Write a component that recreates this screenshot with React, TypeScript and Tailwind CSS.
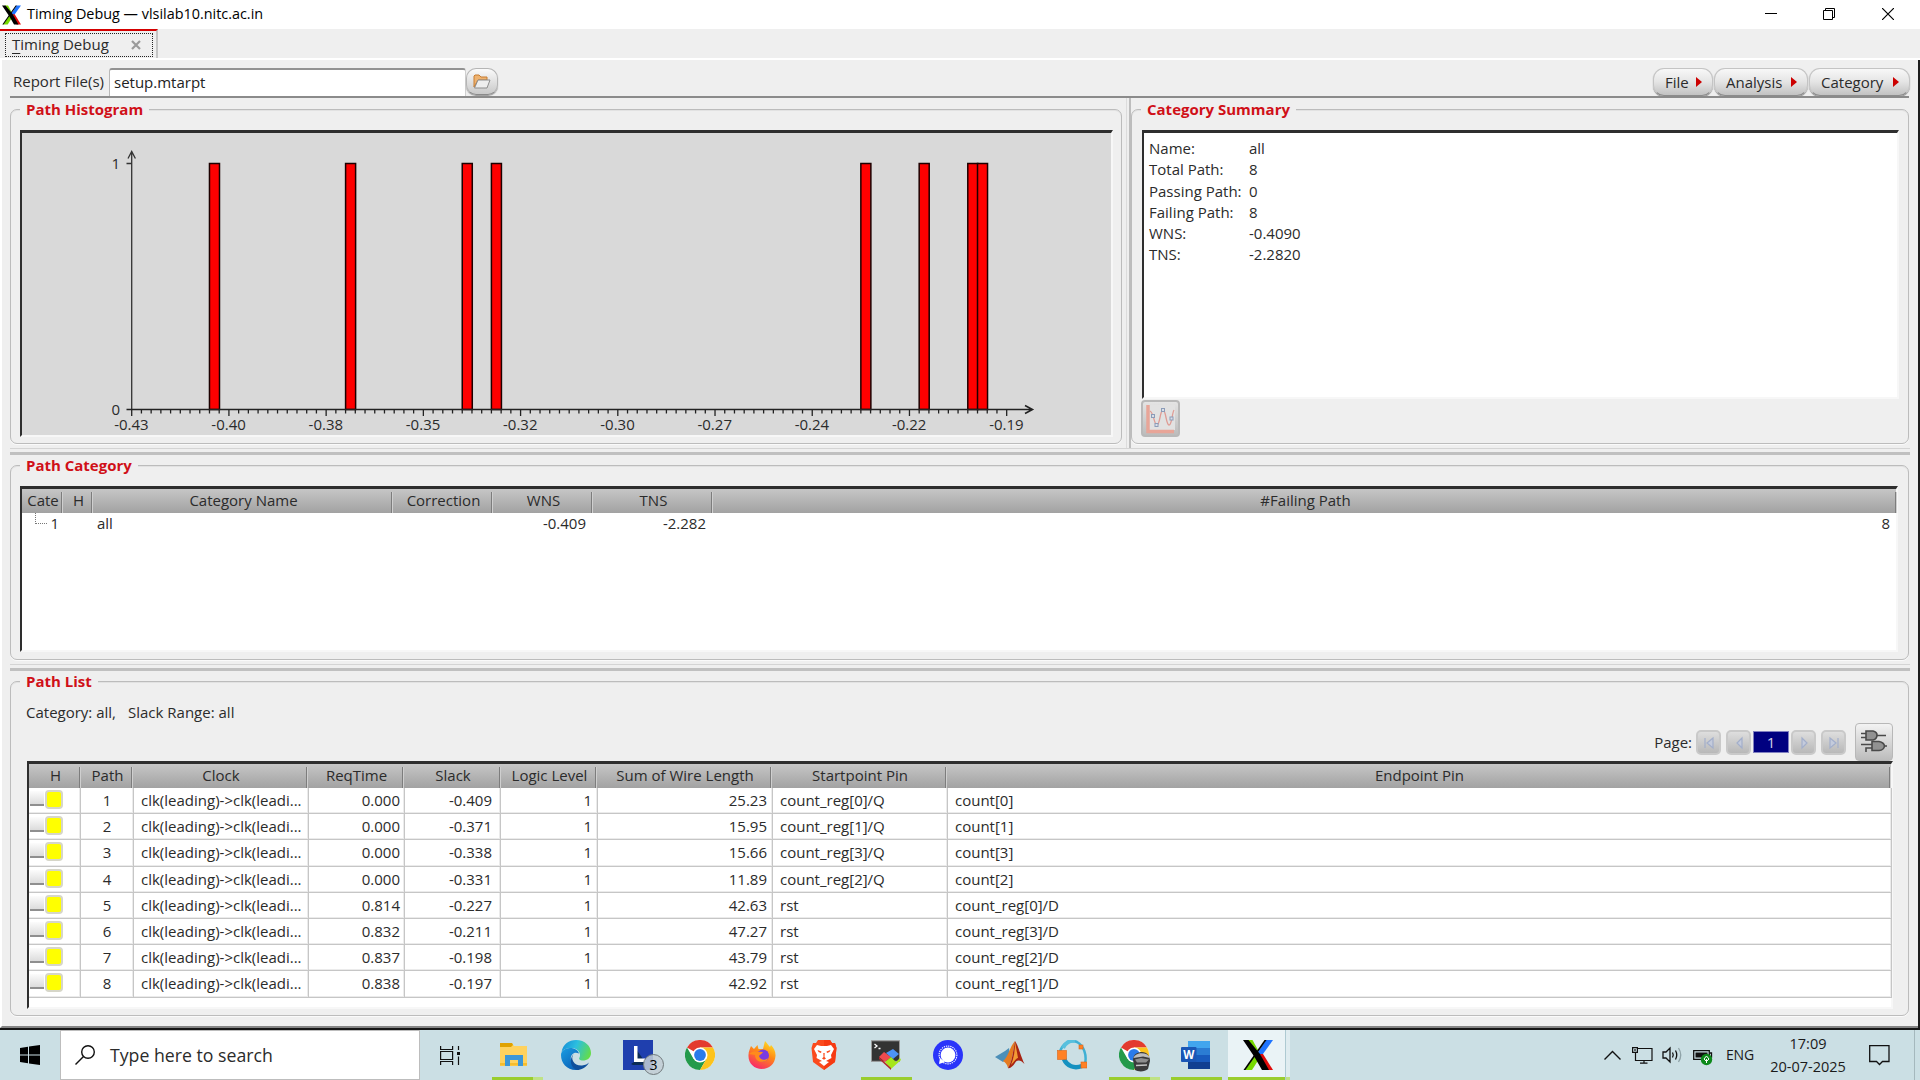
import React from 'react';

const bars = [8, 22, 34, 37, 75, 81, 86, 87];
const xLabels = ['-0.43', '-0.40', '-0.38', '-0.35', '-0.32', '-0.30', '-0.27', '-0.24', '-0.22', '-0.19'];
const STEP = 9.722;
const X0 = 109.7;

const rows = [
  ['1', '0.000', '-0.409', '25.23', 'count_reg[0]/Q', 'count[0]'],
  ['2', '0.000', '-0.371', '15.95', 'count_reg[1]/Q', 'count[1]'],
  ['3', '0.000', '-0.338', '15.66', 'count_reg[3]/Q', 'count[3]'],
  ['4', '0.000', '-0.331', '11.89', 'count_reg[2]/Q', 'count[2]'],
  ['5', '0.814', '-0.227', '42.63', 'rst', 'count_reg[0]/D'],
  ['6', '0.832', '-0.211', '47.27', 'rst', 'count_reg[3]/D'],
  ['7', '0.837', '-0.198', '43.79', 'rst', 'count_reg[2]/D'],
  ['8', '0.838', '-0.197', '42.92', 'rst', 'count_reg[1]/D'],
];

function XLogo({ className }: { className?: string }) {
  return (
    <svg viewBox="0 0 30 30" className={className}>
      <path d="M23 0H30L18.500 16L14.500 13Z" fill="#1f74ff" />
      <path d="M17 14L20 14L30 30H23Z" fill="#e00b0b" />
      <path d="M4 0H9.500L15 10L12 14Z" fill="#76d900" />
      <path d="M2 30L12 15L16 19L9 30Z" fill="#76d900" />
      <path d="M0 0H5.500L17 14L26 30H19L11.500 17Z" fill="#000" />
      <path d="M21.500 0H23.500L2.500 30H0.500Z" fill="#000" />
    </svg>
  );
}

function Group({ title, className, children }: { title: string; className: string; children: React.ReactNode }) {
  return (
    <div className={`relative rounded-[7px] border border-[#bcbcbc] shadow-[inset_0_1px_0_#e2e2e2,0_1px_0_#fafafa] ${className}`}>
      <div className="absolute -top-[10px] left-[9px] bg-[#efefef] px-[6px] text-[15px] leading-[19px] font-bold whitespace-nowrap text-[#d01018]">
        {title}
      </div>
      {children}
    </div>
  );
}

function Histogram() {
  return (
    <svg width="1088" height="303" className="block text-[15px]" fontFamily="Open Sans">
      {bars.map((b) => (
        <rect key={b} x={X0 + b * STEP} y="30.5" width={STEP + 0.3} height="246" fill="#f00" stroke="#1c0000" strokeWidth="1.5" />
      ))}
      <path d="M109.700 277V18M106 25.500L109.700 18.500L113.400 25.500M104.500 30.500H110" stroke="#333" strokeWidth="1.3" fill="none" />
      <path d="M104.500 276.500H1010M1003 272.500L1010.500 276.500L1003 280.500" stroke="#222" strokeWidth="1.6" fill="none" />
      {Array.from({ length: 91 }, (_, i) => (
        <path key={i} d={`M${X0 + i * STEP} 277v${i % 10 === 0 ? 6 : 3.5}`} stroke="#222" strokeWidth="1.3" />
      ))}
      <text x="98" y="36" textAnchor="end" fill="#2b2b2b">1</text>
      <text x="98" y="282" textAnchor="end" fill="#2b2b2b">0</text>
      {xLabels.map((l, i) => (
        <text key={l} x={X0 + i * STEP * 10 - 0.3} y="297" textAnchor="middle" fill="#2b2b2b">{l}</text>
      ))}
    </svg>
  );
}

function MenuButton({ label, className }: { label: string; className: string }) {
  return (
    <div className={`flex h-[28px] items-center justify-between rounded-[11px] border border-[#c4c4c4] border-b-[#8c8c8c] bg-linear-to-b from-[#f8f8f8] via-[#e4e4e4] to-[#c2c2c2] pr-[10px] pb-px pl-[11px] shadow-[0_1px_1px_#8a8a8a] ${className}`}>
      <span>{label}</span>
      <svg width="6" height="10" viewBox="0 0 6 10"><path d="M0 0L6 5L0 10Z" fill="#cc0000" /></svg>
    </div>
  );
}

function HeadCell({ children, className }: { children?: React.ReactNode; className: string }) {
  return (
    <div className={`flex h-full shrink-0 items-end ${className}`}>
      <div className="flex h-full grow items-center justify-center overflow-hidden pb-[2px] pl-[3px] whitespace-nowrap">{children}</div>
      <div className="h-[21px] w-[2px] shrink-0 border-r border-[#cfcfcf] bg-[#7d7d7d]" />
    </div>
  );
}

function PageButton({ d, className = '' }: { d: string; className?: string }) {
  return (
    <div className={`flex h-[25px] w-[25px] items-center justify-center rounded-[5px] border-2 border-[#c9c9c9] bg-linear-to-b from-[#dedede] to-[#b8b8b8] ${className}`}>
      <svg width="12" height="14" viewBox="0 0 12 14" fill="#c4cbdc" stroke="#a3afcb" strokeWidth="1.2"><path d={d} /></svg>
    </div>
  );
}

function Splitter({ className }: { className: string }) {
  return (
    <div className={`border-t border-[#d4d4d4] pt-[3px] ${className}`}>
      <div className="h-[3px] bg-[#c0c0c0]" />
    </div>
  );
}

function Slot({ children, line, className = '' }: { children: React.ReactNode; line?: React.ReactNode; className?: string }) {
  return (
    <div className={`flex h-[50px] w-[62px] shrink-0 flex-col ${className}`}>
      <div className="flex h-[47px] items-start justify-center pt-[10px]">{children}</div>
      <div className="flex h-[3px] justify-center">{line}</div>
    </div>
  );
}

const doubleLine = (
  <div className="flex h-[3px] w-[51px]">
    <div className="w-[41px] bg-[#9acd2e]" />
    <div className="w-[10px] bg-[#bfe285]" />
  </div>
);
const singleLine = <div className="h-[3px] w-[51px] bg-[#9acd2e]" />;

function Chrome() {
  return (
    <>
      <circle cx="15" cy="15" r="15" fill="#fff" />
      <path d="M15 15 L2 7.500 A15 15 0 0 1 28 7.500 L15 7.500 Z" fill="#e33b2e" />
      <path d="M2 7.500 A15 15 0 0 0 15 30 L21.500 18.800 L15 15 L8.500 18.800 Z" fill="#239a4b" />
      <path d="M28 7.500 A15 15 0 0 1 15 30 L21.500 18.800 L19 9 L15 7.500 Z" fill="#fcc31c" />
      <circle cx="15" cy="15" r="7.500" fill="#fff" />
      <circle cx="15" cy="15" r="5.900" fill="#2a7bea" />
    </>
  );
}

function Taskbar() {
  return (
    <div className="flex h-[50px] bg-[#cbdfe4]">
      <div className="flex w-[60px] items-center justify-center">
        <svg width="20" height="20" viewBox="0 0 20 20"><path d="M0 3L8 1.800V9.500H0ZM9 1.600L20 0V9.500H9ZM0 10.500H8V18.200L0 17ZM9 10.500H20V20L9 18.400Z" /></svg>
      </div>
      <div className="flex h-[50px] w-[360px] items-center border border-[#bdbdbd] bg-white pl-[14px]">
        <svg width="20" height="20" viewBox="0 0 20 20" fill="none" stroke="#111" strokeWidth="1.400"><circle cx="13" cy="7" r="6.300" /><path d="M8.500 11.500L0.500 19.500" /></svg>
        <span className="ml-[15px] text-[17.7px] text-[#2b2b2b]">Type here to search</span>
      </div>
      <div className="flex w-[63px] items-center pl-[20px]">
        <svg width="20" height="19" viewBox="0 0 20 19" fill="none" stroke="#111" strokeWidth="1.200"><path d="M0.600 0V3.500H12.600V0M0.600 19V15.500H12.600V19M0.600 5.500H12.600V13.500H0.600ZM18.500 0V4M18.500 10.500V19" /><rect x="17" y="6" width="3" height="3" fill="#111" stroke="none" /></svg>
      </div>

      <Slot line={<div className="ml-[-6px] w-[57px] pl-[9px]">{doubleLine}</div>}>
        <svg width="30" height="30" viewBox="0 0 30 30">
          <path d="M1 3H13L15 6H28V26H1Z" fill="#ffd25e" />
          <path d="M1 3H13L14 5L12 7H1Z" fill="#e0a200" />
          <path d="M1 23H28V25.500H1Z" fill="#f7bd2d" />
          <path d="M6 15H24V26H19V20H11V26H6Z" fill="#3c97d8" />
        </svg>
      </Slot>
      <Slot>
        <svg width="30" height="30" viewBox="0 0 30 30">
          <defs>
            <linearGradient id="edgeTop" x1="0" y1="0.300" x2="1" y2="0.600"><stop offset="0" stopColor="#1791d8" /><stop offset="0.450" stopColor="#2cbfe0" /><stop offset="1" stopColor="#64dd48" /></linearGradient>
            <linearGradient id="edgeSide" x1="0" y1="0" x2="0.700" y2="1"><stop offset="0" stopColor="#1b9de2" /><stop offset="1" stopColor="#0b62b8" /></linearGradient>
          </defs>
          <path d="M0.500 12C2 4 8 0 15 0C24 0 30 6 30 13C30 18 26 20.500 22 20.500C18.500 20.500 17.500 19 18.500 17.500C20 15 19 9 11 8C6 7.500 2 9.500 0.500 12Z" fill="url(#edgeTop)" />
          <path d="M0 15C0 11 4 8 9 8C14 8 17.500 10.500 18 13.500C12.500 11 9 15.500 10 20C11 25 14 28.500 18 29.700C7 31.500 0 24 0 15Z" fill="url(#edgeSide)" />
          <path d="M12.500 14C9 19 13 26 21 25.500C24.500 25.200 26.500 24 28 22.500C25 28 20 30 16 30C10 28 7.500 20 12.500 14Z" fill="#10509c" />
        </svg>
      </Slot>
      <Slot>
        <div className="relative h-[30px] w-[30px] bg-[#1f3fae]">
          <svg width="30" height="30" viewBox="0 0 30 30"><path d="M11 6V22L8 24L10 25H22V22Z" fill="#0b2b55" /><path d="M11 6H14.500V18.500H22V22H11Z" fill="#fff" /></svg>
          <div className="absolute top-[14px] left-[20px] flex h-[21px] w-[21px] items-center justify-center rounded-full border border-[#70797c] bg-[#c3ced5]/85 text-[14px] text-black">3</div>
        </div>
      </Slot>
      <Slot><svg width="30" height="30" viewBox="0 0 30 30"><Chrome /></svg></Slot>
      <Slot>
        <svg width="30" height="30" viewBox="0 0 30 30">
          <defs><linearGradient id="fox" x1="0.800" y1="0" x2="0.300" y2="1"><stop offset="0" stopColor="#ffe226" /><stop offset="0.450" stopColor="#ff8a16" /><stop offset="1" stopColor="#f8256c" /></linearGradient></defs>
          <path d="M4 6L7 9L10.500 5L11.500 9L16 9L18 1C20 3 21 5 23 7L24 5C27 8 28.800 12 28.500 16C28 24 22 29 15 29C7 29 1 23 1.500 15C1.600 11 3 9 4 6Z" fill="url(#fox)" />
          <circle cx="16" cy="15.500" r="6" fill="#7a3be0" />
          <path d="M2 14C6 10 11 12 16 12C15 14 13 14.500 12 16C13 20 18 21 21 18C19 24 8 23 8 15Z" fill="#ff8b1c" />
        </svg>
      </Slot>
      <Slot>
        <svg width="30" height="30" viewBox="0 0 30 30">
          <path d="M9 0H21L23 3L26 3L27.500 8L26 22L15 30L4 22L2.500 8L4 3L7 3Z" fill="#fb4a1d" />
          <path d="M21 0L23 3L26 3L27.500 8L26 22L15 30V0Z" fill="#f63a12" />
          <path d="M8 5L12 6H18L22 5L25 9L22 15L22.500 18L17 21L20 22L15 26L10 22L13 21L7.500 18L8 15L5 9Z" fill="#fff" />
          <path d="M8.500 10L12.500 11.500L12 13L9.500 12ZM21.500 10L17.500 11.500L18 13L20.500 12ZM14.300 13H15.700L15.500 17L17 18.500L15 19.800L13 18.500L14.500 17Z" fill="#fb4a1d" />
        </svg>
      </Slot>
      <Slot line={singleLine}>
        <svg width="30" height="32" viewBox="0 0 30 32">
          <rect x="0.500" y="0.800" width="28" height="20.500" fill="#333" stroke="#999" />
          <path d="M3.500 4L6 6L3.500 8M7.500 8.500H9.500" stroke="#fff" strokeWidth="1.300" fill="none" />
          <path d="M8 17L13 12L20 17L14 22Z" fill="#ef4a4f" />
          <path d="M15 13L22 9L28 14L22 19Z" fill="#4d94f5" />
          <path d="M14 22L20 17L25 22L29 18L30 20L20 29Z" fill="#a6e61a" />
          <path d="M8 17L20 28V30L8 19Z" fill="#b0262b" />
        </svg>
      </Slot>
      <Slot>
        <svg width="30" height="30" viewBox="0 0 30 30"><circle cx="15" cy="15" r="15" fill="#2a34fa" /><circle cx="15" cy="15" r="8.900" fill="none" stroke="#fff" strokeWidth="1.100" strokeDasharray="1.300 0.900" /><circle cx="15" cy="15" r="7.400" fill="#fff" /><path d="M7 18L6 24L12 22Z" fill="#fff" /></svg>
      </Slot>
      <Slot>
        <svg width="30" height="30" viewBox="0 0 30 30">
          <path d="M0 17L10 11L14 8L15 16L8 22Z" fill="#4c8fb8" />
          <path d="M8 21C13 18 15 6 20 1C18 12 17 22 13 28C12 24 10 22 8 21Z" fill="#e57b21" />
          <path d="M20 1C23 5 26 17 29.500 24C25 19 22 20 20 23C18 26 15 29 13 28C17 22 18 12 20 1Z" fill="#a82412" />
          <path d="M20 2C20 10 19 18 16 25C19 22 21 18 23 18C22 12 21 7 20 2Z" fill="#f29b35" />
        </svg>
      </Slot>
      <Slot>
        <svg width="30" height="30" viewBox="0 0 30 30" fill="none">
          <path d="M3 12C5 4 13 -1 20 2C27 6 30 15 28 24" stroke="#3fb0d4" strokeWidth="2.500" />
          <path d="M6 8C8 3 13 0 18 1" stroke="#58c0de" strokeWidth="4" />
          <path d="M7 19C10 26 17 29 25 26" stroke="#1591c0" strokeWidth="4.500" />
          <g fill="#ff8125" stroke="#d9661a" strokeWidth="0.600"><rect x="0.500" y="10.500" width="9" height="9" /><rect x="22" y="5" width="4" height="4" /><rect x="24" y="22" width="6" height="6" /></g>
        </svg>
      </Slot>
      <Slot line={doubleLine}>
        <svg width="31" height="32" viewBox="0 0 31 32">
          <Chrome />
          <path d="M14 20C14 14 19 12 23 12C28 12 31 16 31 21L29 29C26 32 19 32 16 30Z" fill="#3b3b3b" />
          <path d="M14.500 18C16 12.500 28 11 31 18L24 16.500Z" fill="#bdbdbd" />
          <path d="M16 19.500L22 18L30 19.500L27 22.500H18Z" fill="#8e8e8e" />
          <path d="M17 25.500L28 25" stroke="#c5c5c5" strokeWidth="1.300" />
        </svg>
      </Slot>
      <Slot line={singleLine}>
        <svg width="30" height="30" viewBox="0 0 30 30" fontFamily="Open Sans">
          <rect x="7" y="1" width="22" height="7" fill="#41a5ee" /><rect x="7" y="8" width="22" height="7" fill="#2b7cd3" /><rect x="7" y="15" width="22" height="7" fill="#185abd" /><rect x="7" y="22" width="22" height="7" fill="#103f91" />
          <rect x="0" y="7" width="15.500" height="15" rx="1" fill="#1a56b5" />
          <text x="7.700" y="18.700" textAnchor="middle" fontSize="11.500" fontWeight="700" fill="#fff">W</text>
        </svg>
      </Slot>
      <div className="flex">
        <div className="ml-[1px] flex h-[50px] w-[57px] flex-col bg-[#eaf3f6]">
          <div className="flex h-[47px] items-start justify-center pt-[10px] pl-[3px]"><XLogo className="h-[30px] w-[30px]" /></div>
          <div className="h-[3px] bg-[#9acd2e]" />
        </div>
        <div className="flex h-[50px] w-[5px] flex-col border-l border-[#aecad2] bg-[#dfecf0]"><div className="mt-auto h-[3px] bg-[#bfe285]" /></div>
      </div>

      <div className="ml-auto flex h-[50px] items-center text-[#1a1a1a]">
        <svg width="17" height="11" viewBox="0 0 17 11" fill="none" stroke="#111" strokeWidth="1.400"><path d="M0.500 9.500L8.500 1.500L16.500 9.500" /></svg>
        <svg width="21" height="17" viewBox="0 0 21 17" fill="none" stroke="#111" strokeWidth="1.200" className="ml-[11px]"><path d="M6 1.500H20V13.500H3.500V6M12 13.500V16M8 16.200H15.500M0.600 0.600H5.400V5.400H0.600ZM3 2V4" /></svg>
        <svg width="21" height="18" viewBox="0 0 21 18" fill="none" stroke="#111" strokeWidth="1.300" className="ml-[9px]"><path d="M1 6H4L8 2V16L4 12H1ZM10.500 6.500Q12 9 10.500 11.500M13.500 4.500Q16 9 13.500 13.500" /><path d="M16.500 2Q21 9 16.500 16" stroke="#8fa3a8" /></svg>
        <svg width="20" height="18" viewBox="0 0 20 18" className="mt-[4px] ml-[10px]"><path d="M0.700 2.700H16.300V11.300H0.700ZM17 5H18.500V9H17" fill="none" stroke="#111" strokeWidth="1.300" /><rect x="2.500" y="4.500" width="12" height="5" fill="#111" /><circle cx="13.500" cy="11.500" r="5.700" fill="#0d8a1b" /><path d="M13.500 8L16 11L13.500 13.500L11 11ZM13.500 11V15" fill="none" stroke="#fff" strokeWidth="1" /></svg>
        <span className="ml-[13px] w-[30px] text-[14px] tracking-[-0.2px]">ENG</span>
        <div className="ml-[9px] w-[86px] text-center text-[14.5px] leading-[23px]"><div>17:09</div><div>20-07-2025</div></div>
        <svg width="21" height="21" viewBox="0 0 21 21" fill="none" stroke="#111" strokeWidth="1.300" className="mr-[24px] ml-[18px]"><path d="M0.700 0.700H20V16.500H13.500L10.500 19.500L7.500 16.500H0.700Z" /></svg>
        <div className="h-full w-[6px] border-l border-[#a5b8bd]" />
      </div>
    </div>
  );
}

export default function App() {
  return (
    <div className="h-[1080px] w-[1920px] overflow-hidden bg-[#efefef] font-['Open_Sans',sans-serif] text-[15px] leading-[20px] text-[#2b2b2b]">
      <div className="flex h-[29px] items-center bg-white pl-[2px] text-black">
        <XLogo className="h-[20px] w-[19px]" />
        <span className="ml-[6px] pb-px text-[14.4px]">Timing Debug — vlsilab10.nitc.ac.in</span>
        <div className="ml-auto flex items-center pr-[26px] pb-px">
          <svg width="12" height="12" viewBox="0 0 12 12"><path d="M0 5.500H12" stroke="#000" /></svg>
          <svg width="12" height="12" viewBox="0 0 12 12" fill="none" stroke="#000" className="mx-[46px]"><path d="M0.500 2.500H9.500V11.500H0.500ZM2.500 2.500V0.500H11.500V9.500H9.500" /></svg>
          <svg width="12" height="12" viewBox="0 0 12 12" stroke="#000" strokeWidth="1.200" className="ml-px"><path d="M0 0L12 12M12 0L0 12" /></svg>
        </div>
      </div>

      <div className="h-[31px] border-b-2 border-white">
        <div className="h-[29px] w-[158px] border-t-2 border-r-2 border-t-[#d40000] border-r-[#c4c4c4] pt-[2px] pl-[5px]">
          <div className="flex h-[24px] w-[148px] items-center justify-between border border-dotted border-[#222] pr-[11px] pb-[2px] pl-[6px]">
            <span><span className="underline underline-offset-[3px]">T</span>iming Debug</span>
            <svg width="10" height="10" viewBox="0 0 10 10" className="mt-[2px] text-[#9a9a9a]"><path d="M1 1L9 9M9 1L1 9" stroke="currentColor" strokeWidth="2.200" /></svg>
          </div>
        </div>
      </div>

      <div className="flex h-[970px] border-b-2 border-[#151515]">
        <div className="h-[968px] w-[1918px] border-b-2 border-l-2 border-b-[#858585] border-l-white pl-[8px]">
          <div className="flex h-[38px] w-[1899px] items-start border-b-2 border-[#8b8b8b] pt-[8px]">
            <span className="ml-[3px] w-[96px] pt-[3px]">Report File(s)</span>
            <div className="flex h-[28px] w-[357px] items-center rounded-t-[3px] border-t-2 border-r border-l border-t-[#929292] border-r-[#d0d0d0] border-l-[#b8b8b8] bg-white pb-[2px] pl-[4px] text-[#222]">setup.mtarpt</div>
            <div className="flex h-[27px] w-[32px] items-center justify-center rounded-[10px] border border-[#b5b5b5] border-b-[#8a8a8a] bg-linear-to-b from-[#fafafa] to-[#c9c9c9] pb-px shadow-[0_1px_1px_#999]">
              <svg width="18" height="15" viewBox="0 0 18 15"><path d="M1 13V2L2 1H6L8 3H14V6H5L1 13Z" fill="#eeb26f" stroke="#c67d33" /><path d="M1.500 14L5 6H17L14 14Z" fill="#eee" stroke="#8d8d8d" /></svg>
            </div>
            <div className="-mr-px ml-auto flex gap-px">
              <MenuButton label="File" className="w-[60px]" />
              <MenuButton label="Analysis" className="w-[94px]" />
              <MenuButton label="Category" className="w-[101px]" />
            </div>
          </div>

          <div className="flex h-[350px] w-[1899px]">
            <Group title="Path Histogram" className="mt-[11px] h-[335px] w-[1112px] pt-[20px] pr-[8px] pl-[9px]">
              <div className="h-[307px] border-t-3 border-r-2 border-b-2 border-l-2 border-t-[#2e2e2e] border-r-[#f7f7f7] border-b-[#f7f7f7] border-l-[#2e2e2e] bg-[#d9d9d9]"><Histogram /></div>
            </Group>
            <div className="ml-[4px] h-full w-[5px] border-r-2 border-l border-r-[#bdbdbd] border-l-[#dcdcdc]" />
            <Group title="Category Summary" className="mt-[11px] h-[335px] w-[778px] pt-[20px] pl-[10px]">
              <div className="grid h-[269px] w-[757px] grid-cols-[100px_1fr] content-start border-t-3 border-r-2 border-b-2 border-l-2 border-t-[#2e2e2e] border-r-[#f7f7f7] border-b-[#f7f7f7] border-l-[#2e2e2e] bg-white pt-[5px] pl-[5px] leading-[21.3px]">
                <span>Name:</span><span>all</span>
                <span>Total Path:</span><span>8</span>
                <span>Passing Path:</span><span>0</span>
                <span>Failing Path:</span><span>8</span>
                <span>WNS:</span><span>-0.4090</span>
                <span>TNS:</span><span>-2.2820</span>
              </div>
              <div className="mt-[1px] -ml-[1px] flex h-[37px] w-[39px] items-center justify-center rounded-[4px] border-2 border-[#b9b9b9] bg-linear-to-b from-[#e4e4e4] to-[#bcbcbc]">
                <svg width="31" height="31" viewBox="0 0 31 31" fill="none"><rect x="4" y="2" width="26" height="25" fill="#e2e2e2" /><path d="M3 2V28.500H29" stroke="#e8a598" strokeWidth="3.500" /><path d="M5 8C9 10 9 22 12 22C15 22 15 7 18 7C21 7 21 22 24 22C27 22 27 10 29 7" stroke="#df9c95" strokeWidth="1.300" /><g stroke="#8c9cb8" fill="#d9dfe8"><rect x="6.500" y="11.500" width="3" height="3" /><rect x="10" y="20.500" width="3" height="3" /><rect x="16.500" y="5.500" width="3" height="3" /><rect x="25" y="14" width="3" height="3" /></g></svg>
              </div>
            </Group>
          </div>

          <Splitter className="h-[17px] w-[1900px]" />

          <Group title="Path Category" className="h-[195px] w-[1899px] pt-[20px] pl-[9px]">
            <div className="h-[166px] w-[1878px] border-t-3 border-r-2 border-b-2 border-l-2 border-t-[#2e2e2e] border-r-[#f7f7f7] border-b-[#f7f7f7] border-l-[#2e2e2e] bg-white">
              <div className="flex h-[24px] bg-linear-to-b from-[#c6c6c6] to-[#a2a2a2]">
                <HeadCell className="w-[41px]">Cate</HeadCell>
                <HeadCell className="w-[30px]">H</HeadCell>
                <HeadCell className="w-[300px]">Category Name</HeadCell>
                <HeadCell className="w-[100px]">Correction</HeadCell>
                <HeadCell className="w-[100px]">WNS</HeadCell>
                <HeadCell className="w-[120px]">TNS</HeadCell>
                <HeadCell className="w-[1184px]">#Failing Path</HeadCell>
              </div>
              <div className="flex h-[19px] items-center">
                <div className="mb-[8px] ml-[13px] h-[11px] w-[12px] border-b border-l border-dotted border-[#777]" />
                <span className="w-[12px] text-right">1</span>
                <span className="w-[462px] pl-[38px]">all</span>
                <span className="w-[65px] text-right">-0.409</span>
                <span className="w-[120px] text-right">-2.282</span>
                <span className="w-[1184px] text-right">8</span>
              </div>
            </div>
          </Group>

          <Splitter className="mt-[4px] h-[17px] w-[1900px]" />

          <Group title="Path List" className="h-[335px] w-[1899px] pt-[20px] pl-[16px]">
            <div className="-ml-px"><span>Category: all,</span><span className="ml-[12px]">Slack Range: all</span></div>
            <div className="flex h-[39px] w-[1866px] items-start justify-end pt-[1px]">
              <span className="mt-[9px] mr-[4px]">Page:</span>
              <PageButton className="mt-[7px]" d="M2 2V12M10 2L4 7L10 12Z" />
              <PageButton className="mt-[7px] ml-[5px]" d="M9 2L4 7L9 12Z" />
              <div className="mt-[8px] ml-[2px] flex h-[22px] w-[36px] items-center justify-center border border-[#8080c0] bg-[#000080] text-[#d0d0e8]">1</div>
              <PageButton className="mt-[7px] ml-[2px]" d="M4 2L9 7L4 12Z" />
              <PageButton className="mt-[7px] ml-[5px]" d="M10 2V12M2 2L8 7L2 12Z" />
              <div className="ml-[9px] flex h-[38px] w-[38px] items-center justify-center rounded-[4px] border border-[#b8b8b8] bg-linear-to-b from-[#f3f3f3] to-[#bcbcbc] pb-[3px]">
                <svg width="26" height="24" viewBox="0 0 26 24" fill="#929292" stroke="#4a4a4a" strokeWidth="1.600"><path d="M0 4.500H5M0 8.500H5M16 6.500H25M0 15.500H11M5 23V19H11M24 17H26" fill="none" /><path d="M5 2H12Q16 3 16 6Q16 10 12 11H5Z" /><path d="M11 12.500H18Q23 13.500 23.500 17Q23 21 18 21.500H11Z" /></svg>
              </div>
            </div>
            <div className="h-[248px] w-[1866px] border-t-3 border-r-2 border-b-2 border-l-2 border-t-[#2e2e2e] border-r-[#f7f7f7] border-b-[#f7f7f7] border-l-[#2e2e2e] bg-white">
              <div className="flex h-[24px] bg-linear-to-b from-[#c6c6c6] to-[#a2a2a2]">
                <HeadCell className="w-[52px]">H</HeadCell>
                <HeadCell className="w-[52px]">Path</HeadCell>
                <HeadCell className="w-[175px]">Clock</HeadCell>
                <HeadCell className="w-[96px]">ReqTime</HeadCell>
                <HeadCell className="w-[97px]">Slack</HeadCell>
                <HeadCell className="w-[96px]">Logic Level</HeadCell>
                <HeadCell className="w-[175px]">Sum of Wire Length</HeadCell>
                <HeadCell className="w-[175px]">Startpoint Pin</HeadCell>
                <HeadCell className="w-[944px]">Endpoint Pin</HeadCell>
              </div>
              {rows.map((r) => (
                <div key={r[0]} className="grid h-[26.2px] w-[1863px] grid-cols-[52px_53px_175px_96px_96px_97px_175px_175px_1fr] border-b border-[#c6c6c6] leading-[25px] shadow-[inset_0_-1px_0_#ebebeb] *:border-r *:border-[#c6c6c6] *:shadow-[inset_-1px_0_0_#ebebeb]">
                  <div className="flex items-start pt-[2px]">
                    <div className="mt-[1px] ml-px h-[15px] w-[14px] border-b-2 border-[#8f8f8f] bg-linear-to-b from-[#fcfcfc] to-[#dcdcdc]" />
                    <div className="ml-[1px] h-[19px] w-[18px] rounded-[4px] border-2 border-[#d6d6c8] bg-[#ffff00]" />
                  </div>
                  <div className="text-center">{r[0]}</div>
                  <div className="pl-[7px] whitespace-nowrap">clk(leading)-&gt;clk(leadi...</div>
                  <div className="pr-[4px] text-right">{r[1]}</div>
                  <div className="pr-[8px] text-right">{r[2]}</div>
                  <div className="pr-[5px] text-right">1</div>
                  <div className="pr-[5px] text-right">{r[3]}</div>
                  <div className="pl-[7px]">{r[4]}</div>
                  <div className="pl-[7px]">{r[5]}</div>
                </div>
              ))}
            </div>
          </Group>
        </div>
        <div className="h-full w-[2px] bg-[#1c1c1c]" />
      </div>

      <Taskbar />
    </div>
  );
}
